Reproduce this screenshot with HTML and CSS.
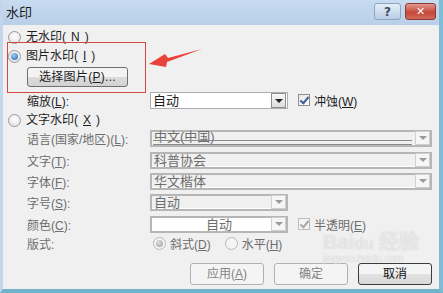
FILE: index.html
```html
<!DOCTYPE html>
<html lang="zh-CN">
<head>
    <meta charset="UTF-8">
    <title>水印</title>
    <link rel="stylesheet" href="styles.css">
</head>
<body>
    <div class="window">
        <div class="titlebar">
            <span class="title">水印</span>
            <div class="caption-btns">
                <span class="cap help">?</span>
                <span class="cap close">✕</span>
            </div>
        </div>

        <div class="content">
            <div class="opt row-a"><span class="radio"></span>无水印(<u>N</u>)</div>
            <div class="opt row-b"><span class="radio checked"></span>图片水印(<u>I</u>)</div>
            <div class="row-c"><span class="btn pick">选择图片(<u>P</u>)...</span></div>

            <div class="field row-d">
                <span class="label">缩放(<u>L</u>):</span>
                <span class="select narrow"><span class="value">自动</span><span class="drop"></span></span>
                <span class="check checked"></span><span class="check-text">冲蚀(<u>W</u>)</span>
            </div>

            <div class="opt row-e"><span class="radio"></span>文字水印(<u>X</u>)</div>

            <div class="field disabled row-f">
                <span class="label">语言(国家/地区)(<u>L</u>):</span>
                <span class="select wide lang"><span class="value">中文(中国)</span><span class="drop"></span></span>
            </div>
            <div class="field disabled row-g">
                <span class="label">文字(<u>T</u>):</span>
                <span class="select wide"><span class="value">科普协会</span><span class="drop"></span></span>
            </div>
            <div class="field disabled row-h">
                <span class="label">字体(<u>F</u>):</span>
                <span class="select wide"><span class="value">华文楷体</span><span class="drop"></span></span>
            </div>
            <div class="field disabled row-i">
                <span class="label">字号(<u>S</u>):</span>
                <span class="select narrow"><span class="value">自动</span><span class="drop"></span></span>
            </div>
            <div class="field disabled row-j">
                <span class="label">颜色(<u>C</u>):</span>
                <span class="select narrow color"><span class="value">自动</span><span class="drop"></span></span>
                <span class="check checked"></span><span class="check-text">半透明(<u>E</u>)</span>
            </div>
            <div class="field disabled row-k">
                <span class="label">版式:</span>
                <span class="radio checked"></span><span class="radio-text">斜式(<u>D</u>)</span>
                <span class="radio"></span><span class="radio-text">水平(<u>H</u>)</span>
            </div>

            <div class="actions">
                <span class="btn off">应用(<u>A</u>)</span>
                <span class="btn off">确定</span>
                <span class="btn main">取消</span>
            </div>
        </div>

        <!-- annotation drawn over the screenshot -->
        <div class="mark-box"></div>
        <svg class="mark-arrow" width="60" height="24" viewBox="0 0 60 24">
            <path d="M54 1 L20 10 L17 6 L1 16 L18 19 L19 14 Z" fill="#e8423b"/>
        </svg>
        <div class="watermark">Bai<span class="paw">du</span> 经验<small>jingyan.baidu.com</small></div>
    </div>
</body>
</html>
```

FILE: styles.css
```css
* {
    box-sizing: border-box;
    margin: 0;
    padding: 0;
}

body {
    width: 443px;
    height: 293px;
    overflow: hidden;
    background: #f0f0f0;
    font-family: "Liberation Sans", "Noto Sans CJK SC", sans-serif;
    font-size: 12px;
    color: #1e1e1e;
}

u {
    text-decoration: underline;
    text-underline-offset: 1px;
}

.window {
    position: relative;
    width: 443px;
    height: 293px;
    background: #f0f0f0;
    border-left: 3px solid #c3d6ea;
    border-right: 4px solid #7fbcd6;
    border-bottom: 4px solid #6fb2c9;
}

.titlebar {
    height: 25px;
    display: flex;
    align-items: center;
    justify-content: space-between;
    padding: 0 3px 0 3px;
    background: linear-gradient(#c8dcf0, #b8cfe8);
}

.title {
    font-size: 13px;
    color: #1a1a1a;
    line-height: 1;
}

.caption-btns {
    display: flex;
    gap: 4px;
    margin-top: -2px;
}

.cap {
    height: 17px;
    display: flex;
    align-items: center;
    justify-content: center;
    border-radius: 3px;
    font-weight: bold;
    line-height: 1;
}

.help {
    width: 27px;
    border: 1px solid #8ea4bf;
    background: linear-gradient(#e4eef8, #b9cde4);
    color: #3c4c60;
    font-size: 12px;
    font-family: "DejaVu Sans", sans-serif;
}

.close {
    width: 31px;
    border: 1px solid #8e3b32;
    background: linear-gradient(#e39a90, #c4483a 55%, #d0685a);
    color: #fff;
    font-size: 11px;
    font-family: "DejaVu Sans", sans-serif;
}

.content {
    display: flex;
    flex-direction: column;
    padding: 0 7px 0 5px;
}

.opt {
    display: flex;
    align-items: center;
    height: 14px;
    line-height: 14px;
    gap: 5px;
}

.row-a { margin-top: 5px; }
.row-b { margin-top: 5px; }
.row-c { margin-top: 4px; padding-left: 19px; height: 20px; }
.row-d { margin-top: 5px; }
.row-e { margin-top: 5px; }
.row-f { margin-top: 3px; }
.row-g { margin-top: 6px; }
.row-h { margin-top: 5px; }
.row-i { margin-top: 5px; }
.row-j { margin-top: 6px; }
.row-k { margin-top: 3px; height: 14px; }

.radio {
    width: 13px;
    height: 13px;
    flex: none;
    border-radius: 50%;
    border: 1px solid #9a9a9a;
    background: radial-gradient(circle at 50% 40%, #ffffff, #dcdcdc);
    position: relative;
}

.radio.checked::after {
    content: "";
    position: absolute;
    left: 2px;
    top: 2px;
    width: 7px;
    height: 7px;
    border-radius: 50%;
    background: radial-gradient(circle at 40% 35%, #9fd0f5, #1f5fa8);
}

.disabled .radio {
    border-color: #b8b8b8;
    background: #f4f4f4;
}

.disabled .radio.checked::after {
    background: radial-gradient(circle at 40% 35%, #e0e0e0, #9a9a9a);
}

.btn {
    display: inline-flex;
    align-items: center;
    justify-content: center;
    border-radius: 3px;
    line-height: 1;
}

.pick {
    width: 101px;
    height: 20px;
    border: 1px solid #707070;
    background: linear-gradient(#f3f3f3 50%, #dcdcdc 50%, #d2d2d2);
    color: #1e1e1e;
    letter-spacing: 0.3px;
}

.field {
    display: flex;
    align-items: center;
    height: 16px;
    padding-left: 19px;
}

.label {
    width: 123px;
    flex: none;
    white-space: nowrap;
}

.disabled {
    color: #6d6d6d;
}

.select {
    position: relative;
    height: 17px;
    display: flex;
    align-items: center;
    border: 1px solid #abadb3;
    background: #fff;
    font-size: 13px;
}

.select .value {
    flex: 1;
    padding-left: 2px;
    line-height: 1;
}

.narrow { width: 138px; }
.wide { width: 283px; }

.drop {
    width: 15px;
    height: 15px;
    flex: none;
    margin-right: 1px;
    border: 1px solid #8d8d8d;
    background: linear-gradient(#f8f8f8, #dcdcdc);
    position: relative;
}

.drop::after {
    content: "";
    position: absolute;
    left: 3px;
    top: 5px;
    border-left: 4px solid transparent;
    border-right: 4px solid transparent;
    border-top: 4px solid #222;
}

.disabled .select {
    border: 2px solid #b6b6b6;
    background: #f0f0f0;
    box-shadow: inset 0 -1px #fff;
    color: #6d6d6d;
}

.disabled .drop {
    height: 14px;
    margin-right: 0;
    border: 1px solid #d0d0d0;
    background: #f6f6f6;
}

.disabled .drop::after {
    border-top-color: #9a9a9a;
    top: 4px;
}

.lang .value {
    transform: translateY(-2px);
}

.lang::after {
    content: "";
    position: absolute;
    left: 1px;
    right: 18px;
    bottom: 0;
    height: 3px;
    border-top: 1px solid #8a8a8a;
    border-bottom: 1px solid #8a8a8a;
}

.select.color {
    background: #fff;
    text-align: center;
}

.color .value {
    padding-left: 15px;
    text-align: center;
}

.check {
    width: 12px;
    height: 12px;
    flex: none;
    margin-left: 10px;
    border: 1px solid #8e8f8f;
    background: linear-gradient(135deg, #e6e6e6, #ffffff);
    position: relative;
}

.check.checked::after {
    content: "";
    position: absolute;
    left: 3px;
    top: 0;
    width: 3px;
    height: 7px;
    border-right: 2px solid #3a5fa0;
    border-bottom: 2px solid #3a5fa0;
    transform: rotate(40deg);
}

.disabled .check {
    border-color: #bcbcbc;
    background: #f4f4f4;
}

.disabled .check.checked::after {
    border-color: #a8a8a8;
}

.check-text {
    margin-left: 4px;
}

.row-k .radio {
    margin-left: 3px;
}

.radio-text {
    margin-left: 4px;
    margin-right: 11px;
}

.actions {
    display: flex;
    justify-content: flex-end;
    gap: 10px;
    margin-top: 12px;
    padding-right: 0;
}

.actions .btn {
    width: 74px;
    height: 22px;
}

.off {
    border: 1px solid #adb2b5;
    background: #f4f4f4;
    color: #838383;
}

.main {
    border: 1px solid #3c3c3c;
    background: linear-gradient(#f4f4f4 50%, #e2e2e2 50%, #d8d8d8);
    color: #111;
}

.mark-box {
    position: absolute;
    left: 4px;
    top: 42px;
    width: 139px;
    height: 51px;
    border: 1px solid #d34a45;
}

.mark-arrow {
    position: absolute;
    left: 145px;
    top: 48px;
}

.watermark {
    position: absolute;
    left: 320px;
    top: 232px;
    font-family: "Liberation Sans", sans-serif;
    font-size: 20px;
    font-weight: bold;
    color: rgba(255, 255, 255, 0.55);
    text-shadow: 0 0 1px rgba(160, 160, 160, 0.5);
    line-height: 1;
}

.watermark .paw {
    font-size: 16px;
}

.watermark small {
    display: block;
    font-size: 10px;
    font-weight: normal;
    margin-top: 2px;
}
```
